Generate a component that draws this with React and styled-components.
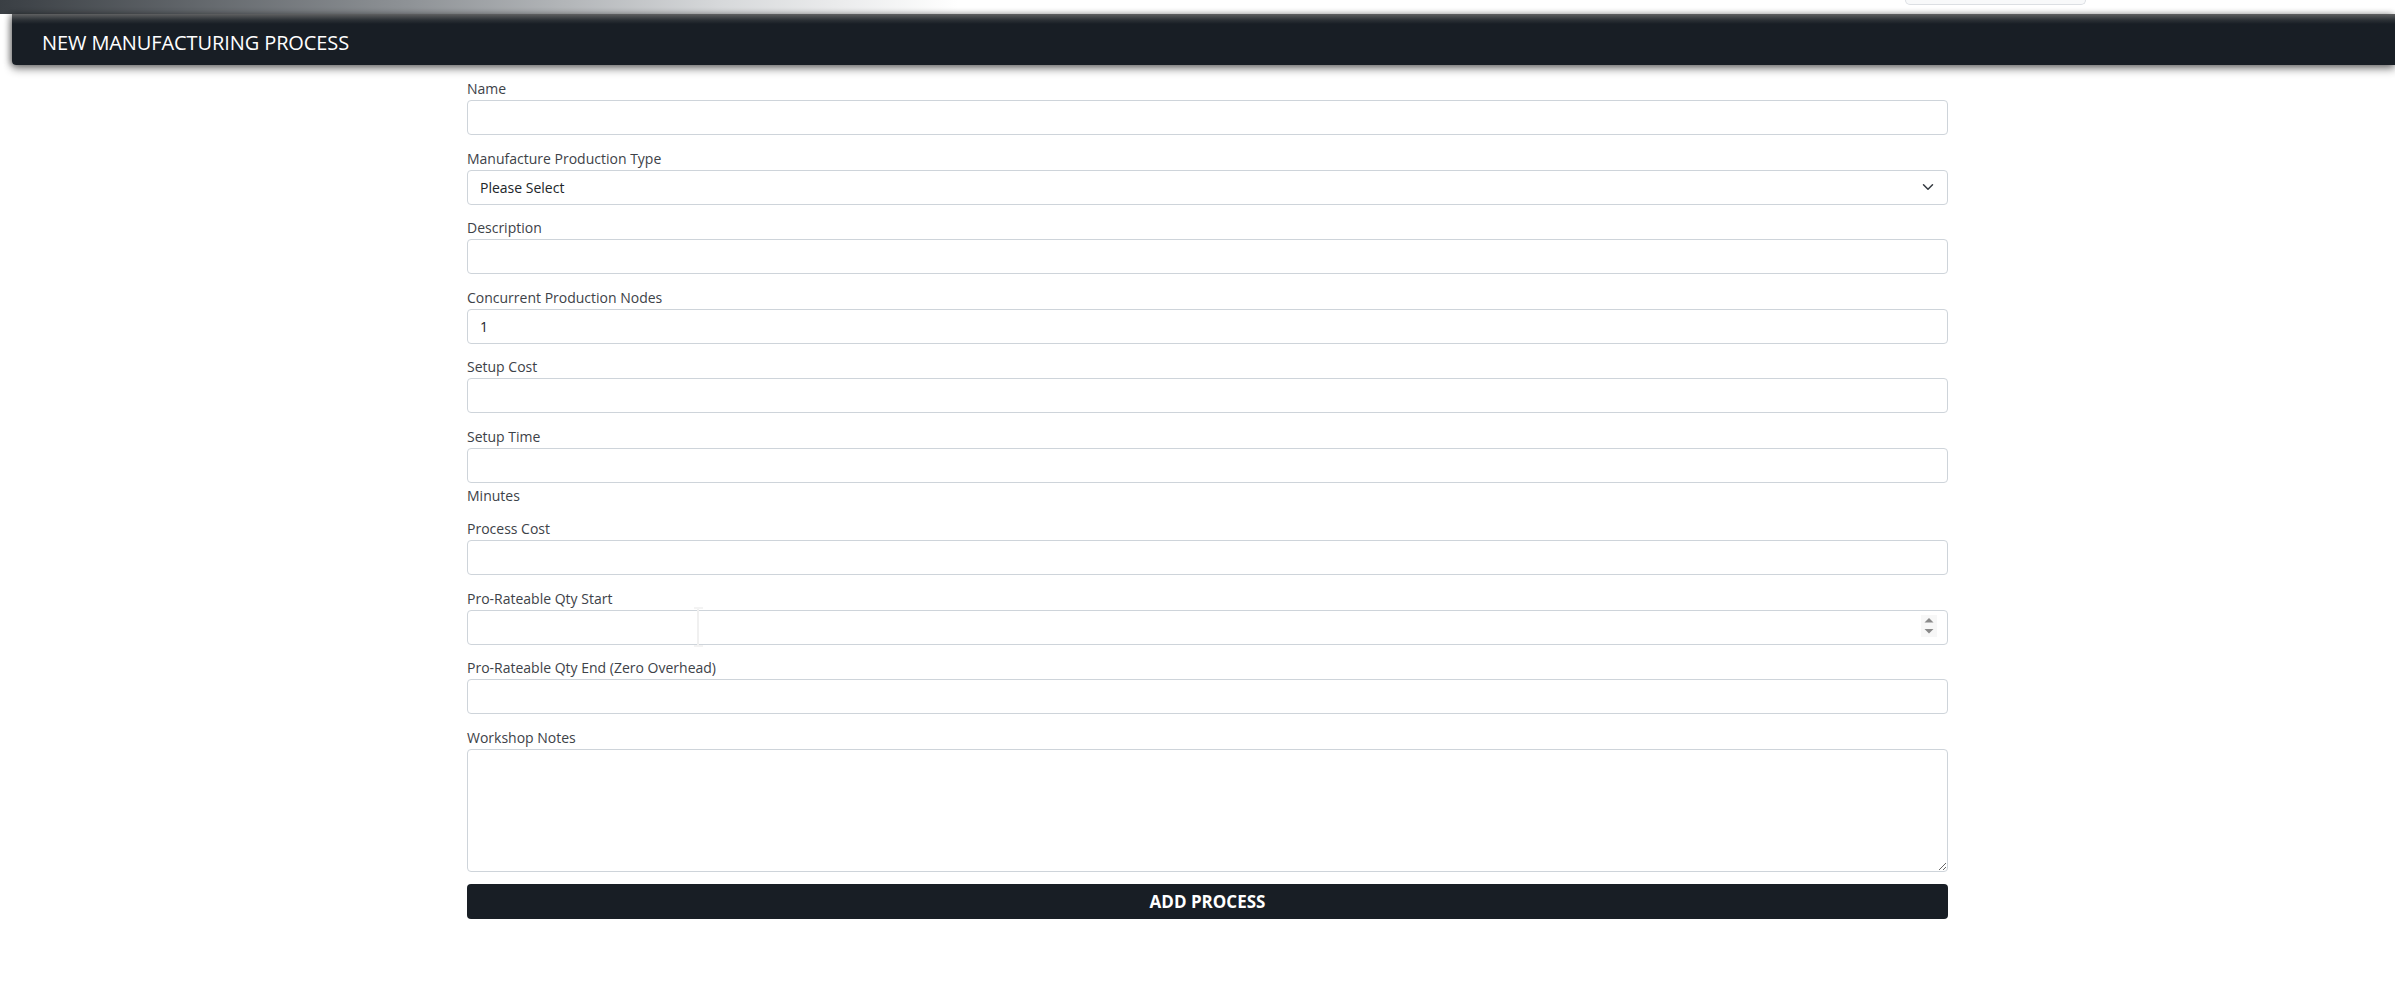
import React from "react";
import styled, { createGlobalStyle } from "styled-components";

const GlobalStyle = createGlobalStyle`
  * {
    box-sizing: border-box;
  }
  body {
    margin: 0;
    background: #fff;
    font-family: "Open Sans", "Noto Sans", Arial, sans-serif;
    color: #212529;
  }
`;

const fields = [
  { label: "Name" },
  { label: "Manufacture Production Type", kind: "select" },
  { label: "Description" },
  { label: "Concurrent Production Nodes", value: "1" },
  { label: "Setup Cost" },
  { label: "Setup Time", help: "Minutes" },
  { label: "Process Cost" },
  { label: "Pro-Rateable Qty Start", kind: "number" },
  { label: "Pro-Rateable Qty End (Zero Overhead)" },
  { label: "Workshop Notes", kind: "textarea" },
];

function App() {
  return (
    <>
      <GlobalStyle />
      <TopStrip>
        <CutBox />
      </TopStrip>
      <TitleBar>
        <Title>NEW MANUFACTURING PROCESS</Title>
      </TitleBar>
      <Form onSubmit={(e) => e.preventDefault()}>
        {fields.map((f) => (
          <Group key={f.label}>
            <Label>{f.label}</Label>
            {f.kind === "select" && (
              <SelectWrap>
                <Select defaultValue="">
                  <option value="">Please Select</option>
                </Select>
                <Chevron viewBox="0 0 16 16">
                  <path
                    d="m2 5 6 6 6-6"
                    fill="none"
                    stroke="#343a40"
                    strokeWidth="2"
                    strokeLinecap="round"
                    strokeLinejoin="round"
                  />
                </Chevron>
              </SelectWrap>
            )}
            {f.kind === "number" && (
              <InputWrap>
                <Input type="number" />
                <Spinner>
                  <svg width="16" height="22" viewBox="0 0 16 22">
                    <path d="M3.5 7.5 8 3l4.5 4.5z" fill="#8a8a8a" />
                    <path d="M3.5 14 8 18.5 12.5 14z" fill="#8a8a8a" />
                  </svg>
                </Spinner>
                <IBeam />
              </InputWrap>
            )}
            {f.kind === "textarea" && <TextArea />}
            {!f.kind && <Input type="text" defaultValue={f.value} />}
            {f.help && <Help>{f.help}</Help>}
          </Group>
        ))}
        <Button type="submit">ADD PROCESS</Button>
      </Form>
    </>
  );
}

export default App;

const TopStrip = styled.div`
  height: 14px;
  display: flex;
  background: linear-gradient(to right, #3a3f44 0%, #8e9296 17%, #d6d8da 30%, #ffffff 40%);
`;

const CutBox = styled.div`
  width: 181px;
  height: 5px;
  margin-left: auto;
  margin-right: 309px;
  background: #f8f9fa;
  border: 1px solid #dcdfe3;
  border-top: none;
  border-radius: 0 0 5px 5px;
`;

const TitleBar = styled.div`
  position: relative;
  height: 51px;
  margin-left: 12px;
  padding: 14px 0 0 30px;
  background: linear-gradient(to bottom, #5f6061 0px, #2c3136 6px, #181e25 10px, #181e25 100%);
  border-bottom-left-radius: 4px;
  box-shadow: 0 4px 8px rgba(0, 0, 0, 0.45), -2px 0 6px rgba(0, 0, 0, 0.35);
`;

const Title = styled.h1`
  margin: 0;
  font-size: 20px;
  line-height: 30px;
  font-weight: 400;
  letter-spacing: -0.1px;
  color: #fff;
`;

const Form = styled.form`
  width: 1481px;
  margin-left: 467px;
  padding-top: 13px;
`;

const Group = styled.div`
  margin-bottom: 12.5px;
`;

const Label = styled.label`
  display: block;
  margin-bottom: 1px;
  font-size: 14px;
  line-height: 21px;
  color: #3d4248;
`;

const Help = styled.div`
  margin: 2px 0 3.5px;
  font-size: 14px;
  line-height: 21px;
  color: #3d4248;
`;

const Input = styled.input`
  display: block;
  width: 100%;
  height: 35px;
  padding: 6px 12px;
  font-family: inherit;
  font-size: 14px;
  line-height: 21px;
  color: #212529;
  background: #fff;
  border: 1px solid #ced4da;
  border-radius: 4px;
  outline: none;
  appearance: textfield;

  &::-webkit-inner-spin-button,
  &::-webkit-outer-spin-button {
    -webkit-appearance: none;
    margin: 0;
  }
`;

const SelectWrap = styled.div`
  position: relative;
`;

const Select = styled.select`
  display: block;
  width: 100%;
  height: 35px;
  padding: 6px 36px 6px 12px;
  font-family: inherit;
  font-size: 14px;
  line-height: 21px;
  color: #212529;
  background: #fff;
  border: 1px solid #ced4da;
  border-radius: 4px;
  outline: none;
  appearance: none;
`;

const Chevron = styled.svg`
  position: absolute;
  right: 12px;
  top: 11px;
  width: 16px;
  height: 12px;
  pointer-events: none;
`;

const InputWrap = styled.div`
  position: relative;
`;

const Spinner = styled.div`
  position: absolute;
  right: 11px;
  top: 5px;
  width: 16px;
  height: 22px;
  background: #f7f7f7;
  display: flex;
  pointer-events: none;
`;

const IBeam = styled.div`
  position: absolute;
  left: 227px;
  top: -3px;
  width: 9px;
  height: 40px;
  pointer-events: none;
  border-top: 2px solid #f3f3f3;
  border-bottom: 2px solid #f3f3f3;

  &::after {
    content: "";
    position: absolute;
    left: 3px;
    top: 0;
    bottom: 0;
    width: 2px;
    background: #f0f0f0;
  }
`;

const TextArea = styled.textarea`
  display: block;
  width: 100%;
  height: 123px;
  padding: 6px 12px;
  font-family: inherit;
  font-size: 14px;
  color: #212529;
  background: #fff;
  border: 1px solid #ced4da;
  border-radius: 4px;
  outline: none;
  resize: vertical;
`;

const Button = styled.button`
  display: block;
  width: 100%;
  height: 35px;
  padding: 0;
  font-family: inherit;
  font-size: 17px;
  font-weight: 700;
  color: #fff;
  background: #181e25;
  border: none;
  border-radius: 4px;
  cursor: pointer;
`;
